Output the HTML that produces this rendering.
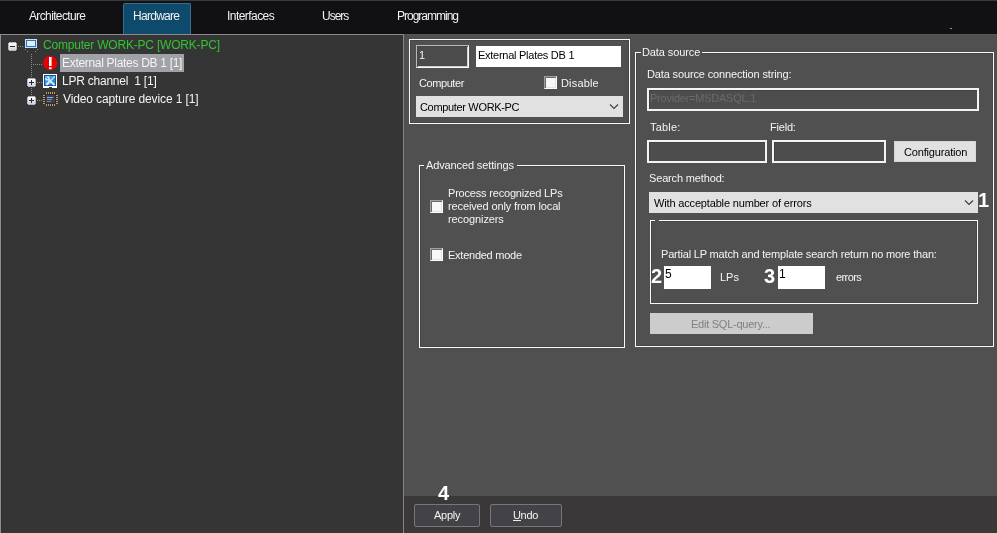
<!DOCTYPE html>
<html><head><meta charset="utf-8">
<style>
*{margin:0;padding:0;box-sizing:border-box}
html,body{width:997px;height:533px;overflow:hidden;background:#505050}
body{position:relative;font-family:"Liberation Sans",sans-serif}
.a{position:absolute}
.t{position:absolute;white-space:pre;font-family:"Liberation Sans",sans-serif;will-change:transform}
#top{left:0;top:0;width:997px;height:34px;background:#111113;border-top:1px solid #3a3a3d}
#topline{left:0;top:34px;width:403px;height:1px;background:#8a8a8a}
#hwtab{left:123px;top:3px;width:68px;height:31px;background:#0d4a6b;border:1px solid #3a6d88;border-bottom:none;border-radius:2px 2px 0 0}
#tree{left:0;top:35px;width:403px;height:498px;background:#353535;border-left:1px solid #8a9092;box-shadow:inset 1px 0 0 #2e3234}
#divider{left:403px;top:34px;width:1px;height:499px;background:#858585}
#bottom{left:404px;top:496px;width:593px;height:37px;background:#3a3839}
.gb{position:absolute;border:1px solid #f8f8f8;box-shadow:inset 0 0 0 1px #474747}
.inp2{position:absolute;border:2px solid #f4f4f4;box-shadow:inset 1px 1px 0 #424242;background:#4d4d4d}
.white{position:absolute;background:#fff}
.combo{position:absolute;background:#e1e1e1}
.btn{position:absolute;background:#e1e1e1;border:1px solid #d6d6d6}
.cb{position:absolute;width:13px;height:13px;background:#f8f8f8;border:1px solid;border-color:#a0a0a0 #ffffff #ffffff #a0a0a0;box-shadow:inset 1px 1px 0 #696969,inset -1px -1px 0 #e3e3e3}
.bbtn{position:absolute;height:23px;border:1px solid #77777b;border-radius:2px;background:#434246}
</style></head><body>
<div class="a" id="top"></div>
<div class="a" id="hwtab"></div>
<div class="a" id="topline"></div>
<div class="a" id="tree"></div>
<div class="a" id="divider"></div>

<!-- tree -->
<div class="a" style="left:60px;top:54px;width:124px;height:18px;background:#a1a1a8"></div>

<!-- box 1 -->
<div class="gb" style="left:409px;top:39px;width:221px;height:85px"></div>
<div class="a" style="left:416px;top:45px;width:53px;height:23px;border:1px solid;border-color:#b8b8b8 #fafafa #fafafa #b8b8b8;background:#4b4b4b;box-shadow:inset 1px 1px 0 #464646,inset -1px -1px 0 #d0d0d0"></div>
<div class="white" style="left:476px;top:46px;width:145px;height:21px"></div>
<div class="cb" style="left:544px;top:76px"></div>
<div class="combo" style="left:416px;top:96px;width:207px;height:21px"></div>

<!-- advanced settings -->
<div class="gb" style="left:419px;top:165px;width:206px;height:183px"></div>
<div class="a" style="left:424px;top:160px;width:93px;height:12px;background:#505050"></div>
<div class="cb" style="left:430px;top:200px"></div>
<div class="cb" style="left:430px;top:248px"></div>

<!-- data source -->
<div class="gb" style="left:635px;top:52px;width:359px;height:295px"></div>
<div class="a" style="left:641px;top:46px;width:61px;height:12px;background:#505050"></div>
<div class="inp2" style="left:647px;top:88px;width:332px;height:23px"></div>
<div class="inp2" style="left:647px;top:140px;width:120px;height:23px"></div>
<div class="inp2" style="left:772px;top:140px;width:114px;height:23px"></div>
<div class="btn" style="left:894px;top:141px;width:82px;height:21px"></div>
<div class="combo" style="left:649px;top:192px;width:329px;height:21px"></div>

<div class="gb" style="left:650px;top:220px;width:328px;height:84px"></div>
<div class="a" style="left:655px;top:219px;width:4px;height:3px;background:#505050"></div>
<div class="white" style="left:664px;top:266px;width:47px;height:23px"></div>
<div class="white" style="left:778px;top:266px;width:47px;height:23px"></div>
<div class="a" style="left:650px;top:313px;width:163px;height:21px;background:#cccccc"></div>

<!-- bottom -->
<div class="a" id="bottom"></div>
<div class="bbtn" style="left:414px;top:504px;width:66px"></div>
<div class="bbtn" style="left:490px;top:504px;width:72px"></div>
<div class="a" style="left:950px;top:28px;width:2px;height:1px;background:#9a9aa0"></div>
<div class="a" style="left:404px;top:34px;width:593px;height:1px;background:#575757"></div>
<svg class="a" style="left:0;top:0" width="70" height="110" viewBox="0 0 70 110" shape-rendering="crispEdges">
<defs>
<linearGradient id="pb" x1="0" y1="0" x2="0" y2="1"><stop offset="0" stop-color="#ffffff"/><stop offset="1" stop-color="#d4d4d4"/></linearGradient>
<linearGradient id="lpr" x1="0" y1="0" x2="1" y2="1"><stop offset="0" stop-color="#5ab0f0"/><stop offset="1" stop-color="#1a78d0"/></linearGradient>
</defs>
<!-- dotted lines -->
<g fill="#8a8a8a">
<rect x="18" y="46" width="1" height="1"/><rect x="20" y="46" width="1" height="1"/><rect x="22" y="46" width="1" height="1"/>
<rect x="31" y="54" width="1" height="1"/><rect x="31" y="56" width="1" height="1"/><rect x="31" y="58" width="1" height="1"/><rect x="31" y="60" width="1" height="1"/><rect x="31" y="62" width="1" height="1"/><rect x="31" y="64" width="1" height="1"/><rect x="31" y="66" width="1" height="1"/><rect x="31" y="68" width="1" height="1"/><rect x="31" y="70" width="1" height="1"/><rect x="31" y="72" width="1" height="1"/><rect x="31" y="74" width="1" height="1"/><rect x="31" y="76" width="1" height="1"/>
<rect x="31" y="88" width="1" height="1"/><rect x="31" y="90" width="1" height="1"/><rect x="31" y="92" width="1" height="1"/><rect x="31" y="94" width="1" height="1"/>
<rect x="33" y="64" width="1" height="1"/><rect x="35" y="64" width="1" height="1"/><rect x="37" y="64" width="1" height="1"/><rect x="39" y="64" width="1" height="1"/><rect x="41" y="64" width="1" height="1"/>
<rect x="37" y="82" width="1" height="1"/><rect x="39" y="82" width="1" height="1"/><rect x="41" y="82" width="1" height="1"/>
<rect x="37" y="100" width="1" height="1"/><rect x="39" y="100" width="1" height="1"/><rect x="41" y="100" width="1" height="1"/>
<rect x="25" y="49" width="1" height="1"/><rect x="37" y="49" width="1" height="1"/><rect x="27" y="51" width="1" height="1"/><rect x="35" y="51" width="1" height="1"/>
</g>
<!-- minus box -->
<rect x="9" y="42" width="7" height="9" fill="#b4b4b4"/><rect x="8" y="43" width="9" height="7" fill="#b4b4b4"/><rect x="9" y="43" width="7" height="7" fill="url(#pb)"/>
<rect x="10" y="46" width="5" height="1" fill="#1e2a55"/>
<!-- plus boxes -->
<rect x="28" y="78" width="7" height="9" fill="#b4b4b4"/><rect x="27" y="79" width="9" height="7" fill="#b4b4b4"/><rect x="28" y="79" width="7" height="7" fill="url(#pb)"/>
<rect x="29" y="82" width="5" height="1" fill="#1e2a55"/><rect x="31" y="80" width="1" height="5" fill="#1e2a55"/>
<rect x="28" y="96" width="7" height="9" fill="#b4b4b4"/><rect x="27" y="97" width="9" height="7" fill="#b4b4b4"/><rect x="28" y="97" width="7" height="7" fill="url(#pb)"/>
<rect x="29" y="100" width="5" height="1" fill="#1e2a55"/><rect x="31" y="98" width="1" height="5" fill="#1e2a55"/>
<!-- computer icon -->
<rect x="25" y="39" width="12" height="9" fill="#c4e2ff"/>
<rect x="26" y="40" width="10" height="7" fill="#3a70b0"/>
<rect x="27" y="41" width="8" height="5" fill="#d8f2ff"/>
<!-- exclamation -->
<g shape-rendering="geometricPrecision">
<circle cx="50.2" cy="63" r="7.2" fill="#e80000"/>
<rect x="49" y="57" width="2.6" height="9" fill="#ffffff"/>
<rect x="49" y="67.2" width="2.6" height="2" fill="#ffffff"/>
</g>
<!-- LPR icon -->
<rect x="43" y="74" width="14" height="13" fill="#ffffff"/>
<rect x="43" y="87" width="6" height="1" fill="#ffffff"/><rect x="52" y="87" width="5" height="1" fill="#ffffff"/>
<rect x="44" y="75" width="12" height="11" fill="#1c4c8c"/>
<rect x="45" y="76" width="10" height="9" fill="url(#lpr)"/>
<g shape-rendering="geometricPrecision" stroke="#cdeeff" stroke-linecap="round" fill="none">
<line x1="48.6" y1="79.6" x2="54" y2="84.4" stroke-width="2"/>
<line x1="54.6" y1="76.6" x2="50.2" y2="81" stroke-width="1.2"/>
<line x1="50.2" y1="81" x2="47" y2="84.2" stroke-width="2.2"/>
<circle cx="47.3" cy="78.3" r="1.6" stroke-width="1.4"/>
</g>
<rect x="45" y="76" width="2" height="2" fill="#5ab0f0" shape-rendering="geometricPrecision"/>
<!-- chip icon -->
<g fill="#c99a45">
<rect x="46" y="92" width="1" height="2"/><rect x="48" y="92" width="1" height="2"/><rect x="50" y="92" width="1" height="2"/><rect x="52" y="92" width="1" height="2"/><rect x="54" y="92" width="1" height="2"/>
<rect x="46" y="104" width="1" height="2"/><rect x="48" y="104" width="1" height="2"/><rect x="50" y="104" width="1" height="2"/><rect x="52" y="104" width="1" height="2"/><rect x="54" y="104" width="1" height="2"/>
<rect x="43" y="95" width="2" height="1"/><rect x="43" y="97" width="2" height="1"/><rect x="43" y="99" width="2" height="1"/><rect x="43" y="101" width="2" height="1"/><rect x="43" y="103" width="2" height="1"/>
<rect x="56" y="95" width="2" height="1"/><rect x="56" y="97" width="2" height="1"/><rect x="56" y="99" width="2" height="1"/><rect x="56" y="101" width="2" height="1"/><rect x="56" y="103" width="2" height="1"/>
</g>
<rect x="45" y="94" width="11" height="10" fill="#2a2a30"/>
<rect x="46" y="95" width="9" height="8" fill="#353e5a"/>
<rect x="47" y="97" width="6" height="1" fill="#a0b0c8"/><rect x="47" y="99" width="5" height="1" fill="#8090b0"/><rect x="47" y="101" width="4" height="1" fill="#708090"/>
</svg>

<div class="a" style="left:513px;top:520px;width:8px;height:1px;background:#eeeeee"></div>
<svg class="a" style="left:608px;top:102px" width="12" height="9" viewBox="0 0 12 9"><polyline points="2,2.5 6,6.5 10,2.5" fill="none" stroke="#3c3c3c" stroke-width="1.1"/></svg>
<svg class="a" style="left:963px;top:198px" width="12" height="9" viewBox="0 0 12 9"><polyline points="2,2.5 6,6.5 10,2.5" fill="none" stroke="#3c3c3c" stroke-width="1.1"/></svg>

<div class="t" style="left:29px;top:9px;font-size:12px;line-height:14px;font-weight:400;color:#f2f2f2;letter-spacing:-0.636px;">Architecture</div>
<div class="t" style="left:133px;top:9px;font-size:12px;line-height:14px;font-weight:400;color:#f2f2f2;letter-spacing:-0.714px;">Hardware</div>
<div class="t" style="left:227px;top:9px;font-size:12px;line-height:14px;font-weight:400;color:#f2f2f2;letter-spacing:-0.556px;">Interfaces</div>
<div class="t" style="left:322px;top:9px;font-size:12px;line-height:14px;font-weight:400;color:#f2f2f2;letter-spacing:-1.0px;">Users</div>
<div class="t" style="left:397px;top:9px;font-size:12px;line-height:14px;font-weight:400;color:#f2f2f2;letter-spacing:-1.0px;">Programming</div>
<div class="t" style="left:43px;top:38px;font-size:12px;line-height:14px;font-weight:400;color:#2fc52f;letter-spacing:-0.2px;">Computer WORK-PC [WORK-PC]</div>
<div class="t" style="left:62px;top:56px;font-size:12px;line-height:14px;font-weight:400;color:#f4f4f4;letter-spacing:-0.304px;">External Plates DB 1 [1]</div>
<div class="t" style="left:62px;top:74px;font-size:12px;line-height:14px;font-weight:400;color:#f4f4f4;letter-spacing:-0.235px;">LPR channel  1 [1]</div>
<div class="t" style="left:63px;top:92px;font-size:12px;line-height:14px;font-weight:400;color:#f4f4f4;letter-spacing:-0.12px;">Video capture device 1 [1]</div>
<div class="t" style="left:419px;top:49px;font-size:11px;line-height:13px;font-weight:400;color:#f4f4f4;letter-spacing:0.0px;">1</div>
<div class="t" style="left:478px;top:49px;font-size:11px;line-height:13px;font-weight:400;color:#000000;letter-spacing:-0.263px;">External Plates DB 1</div>
<div class="t" style="left:419px;top:77px;font-size:11px;line-height:13px;font-weight:400;color:#f4f4f4;letter-spacing:-0.429px;">Computer</div>
<div class="t" style="left:561px;top:77px;font-size:11px;line-height:13px;font-weight:400;color:#f4f4f4;letter-spacing:0.167px;">Disable</div>
<div class="t" style="left:420px;top:101px;font-size:11px;line-height:13px;font-weight:400;color:#000000;letter-spacing:-0.333px;">Computer WORK-PC</div>
<div class="t" style="left:426px;top:159px;font-size:11px;line-height:13px;font-weight:400;color:#f4f4f4;letter-spacing:-0.125px;">Advanced settings</div>
<div class="t" style="left:448px;top:187px;font-size:11px;line-height:13px;font-weight:400;color:#f4f4f4;letter-spacing:-0.19px;">Process recognized LPs</div>
<div class="t" style="left:448px;top:200px;font-size:11px;line-height:13px;font-weight:400;color:#f4f4f4;letter-spacing:-0.13px;">received only from local</div>
<div class="t" style="left:448px;top:213px;font-size:11px;line-height:13px;font-weight:400;color:#f4f4f4;letter-spacing:-0.1px;">recognizers</div>
<div class="t" style="left:448px;top:249px;font-size:11px;line-height:13px;font-weight:400;color:#f4f4f4;letter-spacing:-0.25px;">Extended mode</div>
<div class="t" style="left:642px;top:46px;font-size:11px;line-height:13px;font-weight:400;color:#f4f4f4;letter-spacing:-0.1px;">Data source</div>
<div class="t" style="left:647px;top:68px;font-size:11px;line-height:13px;font-weight:400;color:#f4f4f4;letter-spacing:-0.138px;">Data source connection string:</div>
<div class="t" style="left:650px;top:92px;font-size:11px;line-height:13px;font-weight:400;color:#6a6a6a;letter-spacing:-0.235px;">Provider=MSDASQL.1</div>
<div class="t" style="left:650px;top:121px;font-size:11px;line-height:13px;font-weight:400;color:#f4f4f4;letter-spacing:0.2px;">Table:</div>
<div class="t" style="left:770px;top:121px;font-size:11px;line-height:13px;font-weight:400;color:#f4f4f4;letter-spacing:-0.2px;">Field:</div>
<div class="t" style="left:904px;top:146px;font-size:11px;line-height:13px;font-weight:400;color:#000000;letter-spacing:-0.167px;">Configuration</div>
<div class="t" style="left:649px;top:172px;font-size:11px;line-height:13px;font-weight:400;color:#f4f4f4;letter-spacing:-0.154px;">Search method:</div>
<div class="t" style="left:654px;top:197px;font-size:11px;line-height:13px;font-weight:400;color:#000000;letter-spacing:-0.161px;">With acceptable number of errors</div>
<div class="t" style="left:661px;top:248px;font-size:11px;line-height:13px;font-weight:400;color:#f4f4f4;letter-spacing:-0.179px;">Partial LP match and template search return no more than:</div>
<div class="t" style="left:720px;top:271px;font-size:11px;line-height:13px;font-weight:400;color:#f4f4f4;letter-spacing:0.0px;">LPs</div>
<div class="t" style="left:836px;top:271px;font-size:11px;line-height:13px;font-weight:400;color:#f4f4f4;letter-spacing:-0.6px;">errors</div>
<div class="t" style="left:665px;top:267px;font-size:12px;line-height:14px;font-weight:400;color:#000000;letter-spacing:0.0px;">5</div>
<div class="t" style="left:779px;top:267px;font-size:12px;line-height:14px;font-weight:400;color:#000000;letter-spacing:0.0px;">1</div>
<div class="t" style="left:691px;top:318px;font-size:11px;line-height:13px;font-weight:400;color:#808080;letter-spacing:-0.25px;">Edit SQL-query...</div>
<div class="t" style="left:434px;top:509px;font-size:11px;line-height:13px;font-weight:400;color:#f4f4f4;letter-spacing:-0.25px;">Apply</div>
<div class="t" style="left:513px;top:509px;font-size:11px;line-height:13px;font-weight:400;color:#f4f4f4;letter-spacing:-0.333px;">Undo</div>
<div class="t" style="left:978px;top:189px;font-size:20px;line-height:22px;font-weight:700;color:#ffffff;letter-spacing:0.0px;">1</div>
<div class="t" style="left:651px;top:265px;font-size:20px;line-height:22px;font-weight:700;color:#ffffff;letter-spacing:0.0px;">2</div>
<div class="t" style="left:764px;top:265px;font-size:20px;line-height:22px;font-weight:700;color:#ffffff;letter-spacing:0.0px;">3</div>
<div class="t" style="left:438px;top:482px;font-size:20px;line-height:22px;font-weight:700;color:#ffffff;letter-spacing:0.0px;">4</div>
</body></html>
